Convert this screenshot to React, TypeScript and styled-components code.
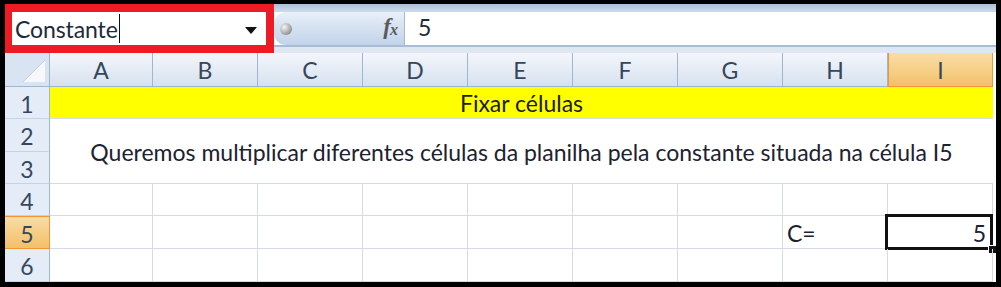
import styled, { createGlobalStyle } from "styled-components"

const GlobalStyle = createGlobalStyle`
  html, body {
    margin: 0;
    padding: 0;
    background: #ffffff;
  }
  body {
    font-family: Lato, "Open Sans", sans-serif;
  }
`

const columns = ["A", "B", "C", "D", "E", "F", "G", "H", "I"]
const rowHeights = [32, 33, 32, 32, 33, 33]

export default function App() {
  return (
    <>
      <GlobalStyle />
      <Frame>
        <FormulaBar>
          <NameBox>
            <NameText>Constante</NameText>
            <Caret />
            <DropArrow width="12" height="7" viewBox="0 0 12 7">
              <polygon points="0,0 12,0 6,7" fill="#111" />
            </DropArrow>
          </NameBox>
          <FxArea>
            <FxButton>
              <svg width="14" height="14" viewBox="0 0 14 14">
                <defs>
                  <radialGradient id="ball" cx="35%" cy="35%" r="70%">
                    <stop offset="0%" stopColor="#f4f4f4" />
                    <stop offset="60%" stopColor="#b8b8b8" />
                    <stop offset="100%" stopColor="#8c8c8c" />
                  </radialGradient>
                </defs>
                <circle cx="7" cy="7" r="6" fill="url(#ball)" />
              </svg>
              <FxLabel>
                f<sub>x</sub>
              </FxLabel>
            </FxButton>
          </FxArea>
          <FormulaInput>
            <FormulaText>5</FormulaText>
          </FormulaInput>
        </FormulaBar>

        <Sheet>
          <Corner>
            <svg width="22" height="22" viewBox="0 0 22 22">
              <polygon points="22,0 22,22 0,22" fill="#f6f8fb" />
              <line x1="22" y1="0" x2="0" y2="22" stroke="#c3cfdd" strokeWidth="1" />
            </svg>
          </Corner>
          {columns.map((c) => (
            <ColHeader key={c} $active={c === "I"}>
              {c}
            </ColHeader>
          ))}
          <Filler />

          {rowHeights.map((_, i) => (
            <RowHeader key={i} $active={i === 4} $row={i + 2}>
              {i + 1}
            </RowHeader>
          ))}

          <Title>Fixar células</Title>
          <Filler $row={2} />

          <Note>Queremos multiplicar diferentes células da planilha pela constante situada na célula I5</Note>
          <Filler $row={3} $span={2} />

          {[5, 6, 7].map((r) =>
            columns.map((c, ci) => (
              <Cell key={c + r} $row={r} $col={ci + 3}>
                {r === 6 && c === "H" && <CellText>C=</CellText>}
                {r === 6 && c === "I" && (
                  <>
                    <CellText $right>5</CellText>
                    <Selection>
                      <FillHandle />
                    </Selection>
                  </>
                )}
              </Cell>
            ))
          )}
          <Filler $row={5} $span={3} />
        </Sheet>
      </Frame>
    </>
  )
}

const Frame = styled.div`
  width: 1001px;
  height: 287px;
  box-sizing: border-box;
  border: solid #000;
  border-width: 4px 5px 5px 5px;
  background: #fff;
  display: flex;
  flex-direction: column;
  overflow: hidden;
`

const FormulaBar = styled.div`
  height: 49px;
  display: flex;
  background: linear-gradient(
    to bottom,
    #a9bfd9 0px,
    #cbd9ea 7px,
    #cbd9ea 8px,
    #ffffff 8px,
    #ffffff 41px,
    #a7bcd5 41px,
    #a7bcd5 43px,
    #dde6f1 43px
  );
`

const NameBox = styled.div`
  width: 269px;
  box-sizing: border-box;
  border: 8px solid #ed1c24;
  border-left-width: 7px;
  background: #fff;
  display: flex;
  align-items: center;
  padding-left: 3px;
  position: relative;
`

const NameText = styled.span`
  font-size: 23px;
  color: #1d2a3b;
  letter-spacing: -0.1px;
`

const Caret = styled.span`
  width: 1px;
  height: 29px;
  background: #111;
  margin-left: 1px;
`

const DropArrow = styled.svg`
  margin-left: auto;
  margin-right: 9px;
  margin-top: 3px;
`

const FxArea = styled.div`
  width: 131px;
  padding: 8px 0 8px 0;
  box-sizing: border-box;
  display: flex;
`

const FxButton = styled.div`
  flex: 1;
  display: flex;
  align-items: center;
  justify-content: space-between;
  padding: 0 7px 0 5px;
  border-radius: 12px 0 0 12px;
  border-right: 1px solid #a3b8d2;
  background: linear-gradient(to bottom, #e9f0f9 0%, #d6e2f1 45%, #c2d3ea 100%);
`

const FxLabel = styled.span`
  font-family: "Liberation Serif", "DejaVu Serif", serif;
  font-style: italic;
  font-weight: bold;
  font-size: 23px;
  color: #5a5a5a;
  margin-top: -3px;
  letter-spacing: -1px;

  sub {
    font-size: 16px;
    vertical-align: -1px;
  }
`

const FormulaInput = styled.div`
  flex: 1;
  display: flex;
  align-items: center;
  padding-left: 13px;
`

const FormulaText = styled.span`
  font-size: 23px;
  color: #1d2a3b;
  margin-top: -4px;
`

const Sheet = styled.div`
  flex: 1;
  display: grid;
  grid-template-columns: 45px 103px repeat(8, 105px) 1fr;
  grid-template-rows: 34px 32px 33px 32px 32px 33px 33px;
  font-size: 23px;
`

const headerFace = `
  display: flex;
  align-items: center;
  justify-content: center;
  box-sizing: border-box;
  color: #35475c;
`

const Corner = styled.div`
  grid-column: 1;
  grid-row: 1;
  box-sizing: border-box;
  background: #d9e4f2;
  border-right: 1px solid #9eb6ce;
  border-bottom: 1px solid #9eb6ce;
  display: flex;
  align-items: flex-end;
  justify-content: flex-end;
  padding: 0 4px 4px 0;
`

const ColHeader = styled.div<{ $active?: boolean }>`
  ${headerFace}
  grid-row: 1;
  background: ${(p) =>
    p.$active
      ? "linear-gradient(to bottom, #f9dca5 0%, #f6cf86 55%, #f2c068 100%)"
      : "linear-gradient(to bottom, #f3f6fb 0%, #e4ebf5 55%, #d7e1ee 100%)"};
  border-right: 1px solid ${(p) => (p.$active ? "#f29536" : "#9eb6ce")};
  border-left: ${(p) => (p.$active ? "1px solid #f29536" : "none")};
  border-bottom: 1px solid ${(p) => (p.$active ? "#f29536" : "#9eb6ce")};
  padding-top: 1px;
`

const RowHeader = styled.div<{ $active?: boolean; $row: number }>`
  ${headerFace}
  grid-column: 1;
  grid-row: ${(p) => p.$row};
  background: ${(p) =>
    p.$active ? "linear-gradient(to bottom, #f9dca5, #f2c068)" : "#e4ecf7"};
  border-right: 1px solid ${(p) => (p.$active ? "#f29536" : "#9eb6ce")};
  border-bottom: 1px solid ${(p) => (p.$active ? "#f29536" : "#c5d3e3")};
  border-top: ${(p) => (p.$active ? "1px solid #f29536" : "none")};
  padding-top: 2px;
`

const Title = styled.div`
  grid-column: 2 / span 9;
  grid-row: 2;
  background: #ffff00;
  display: flex;
  align-items: center;
  justify-content: center;
  color: #1c1c10;
  border-bottom: 1px solid #d8dde6;
  box-sizing: border-box;
  padding-top: 1px;
`

const Note = styled.div`
  grid-column: 2 / span 9;
  grid-row: 3 / span 2;
  display: flex;
  align-items: center;
  justify-content: center;
  color: #1c2230;
  border-bottom: 1px solid #d4dbe6;
  box-sizing: border-box;
  padding-top: 2px;
`

const Filler = styled.div<{ $row?: number; $span?: number }>`
  grid-column: 11;
  grid-row: ${(p) => p.$row ?? 1} / span ${(p) => p.$span ?? 1};
  background: #fff;
`

const Cell = styled.div<{ $row: number; $col: number }>`
  grid-column: ${(p) => p.$col - 1};
  grid-row: ${(p) => p.$row};
  box-sizing: border-box;
  border-right: 1px solid #d4dbe6;
  border-bottom: 1px solid #d4dbe6;
  display: flex;
  align-items: center;
  padding: 2px 6px 0 4px;
  position: relative;
  color: #1c2230;
`

const CellText = styled.span<{ $right?: boolean }>`
  margin-left: ${(p) => (p.$right ? "auto" : "0")};
`

const Selection = styled.div`
  position: absolute;
  left: -3px;
  top: -2px;
  right: -1px;
  bottom: -2px;
  border: 3px solid #111;
  pointer-events: none;
`

const FillHandle = styled.div`
  position: absolute;
  right: -6px;
  bottom: -6px;
  width: 7px;
  height: 7px;
  background: #111;
  border: 1px solid #fff;
  border-right: none;
  border-bottom: none;
`
